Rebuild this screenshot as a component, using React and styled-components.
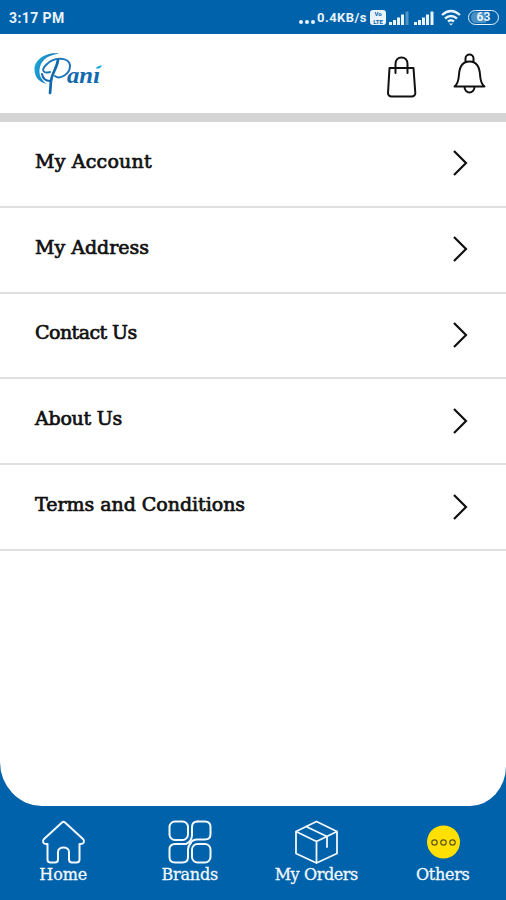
import React from "react";
import styled, { createGlobalStyle } from "styled-components";

const Global = createGlobalStyle`
  * { box-sizing: border-box; }
  body { margin: 0; background: #0062aa; }
`;

const Screen = styled.div`
  width: 506px;
  height: 900px;
  display: flex;
  flex-direction: column;
  overflow: hidden;
  background: #0062aa;
`;

const StatusBar = styled.div`
  height: 34px;
  flex: none;
  padding: 1px 7px 0 9px;
  display: flex;
  align-items: center;
  justify-content: space-between;
  color: #e9f3fb;
  font: 700 13px/34px Roboto, sans-serif;
`;

const Clock = styled.span`
  font-size: 14px;
  letter-spacing: 0.4px;
`;

const StatusIcons = styled.div`
  display: flex;
  align-items: center;
`;

const Dots = styled.div`
  display: flex;
  gap: 2px;
  margin: 8px 2px 0 0;
  i {
    width: 4px;
    height: 4px;
    border-radius: 50%;
    background: #e9f3fb;
  }
`;

const Speed = styled.span`
  width: 51px;
  white-space: nowrap;
  letter-spacing: 0.45px;
  margin-right: 2px;
`;

const SimBadge = styled.span`
  width: 16px;
  height: 15px;
  border-radius: 3px;
  background: #e9f3fb;
  color: #0062aa;
  display: flex;
  flex-direction: column;
  align-items: center;
  justify-content: center;
  font: 700 6px/7.2px Roboto, sans-serif;
  margin-right: 3px;
`;

const SignalIcon = styled.svg`
  margin-right: 5px;
`;

const Wifi = styled.svg`
  margin-left: 1px;
`;

const Battery = styled.span`
  width: 31px;
  height: 15px;
  margin-left: 6px;
  border: 1.5px solid #e9f3fb;
  border-radius: 8px;
  display: flex;
  align-items: center;
  justify-content: center;
  font: 700 12px/13px Roboto, sans-serif;
  background: linear-gradient(90deg, #4a8fc4 0 60%, #0062aa 60%) content-box;
  padding: 1px 2px;
`;

const Header = styled.header`
  height: 88px;
  flex: none;
  display: flex;
  align-items: flex-start;
  justify-content: space-between;
  padding: 16px 20px 0 32px;
  background: #fff;
  border-bottom: 9px solid #d5d5d5;
`;

const Actions = styled.div`
  display: flex;
  gap: 35px;
`;

const Panel = styled.main`
  height: 684px;
  flex: none;
  background: #fff;
  border-radius: 0 0 36px 42px / 0 0 40px 44px;
`;

const Row = styled.div`
  height: 85.8px;
  display: flex;
  align-items: center;
  justify-content: space-between;
  padding: 0 38px 6px 35px;
  border-bottom: 2px solid #e0e0e0;
`;

const Label = styled.span`
  font: 400 19px/26px "DejaVu Serif", serif;
  letter-spacing: ${(p) => p.$spacing}px;
  color: #111;
  -webkit-text-stroke: 0.7px #111;
  white-space: nowrap;
`;

const Chevron = styled.svg`
  margin-top: 5px;
`;

const Nav = styled.nav`
  height: 94px;
  flex: none;
  display: grid;
  grid-template-columns: repeat(4, 126.5px);
`;

const NavItem = styled.div`
  display: flex;
  flex-direction: column;
  align-items: center;
  padding-top: 14px;
`;

const NavLabel = styled.span`
  font: 400 16px/22px "DejaVu Serif", serif;
  letter-spacing: ${(p) => p.$spacing}px;
  color: #f2f8fd;
  -webkit-text-stroke: 0.3px #f2f8fd;
  white-space: nowrap;
`;

const NavIcon = styled.svg.attrs({ width: 44, height: 44, viewBox: "0 0 44 44" })`
  display: block;
  overflow: visible;
  fill: none;
  stroke: #f2f8fd;
  stroke-width: ${(p) => p.$weight || 2}px;
  stroke-linejoin: round;
  stroke-linecap: round;
`;

const Logo = () => (
  <svg width="72" height="48" viewBox="0 0 72 48" fill="none">
    <defs>
      <linearGradient id="water" x1="0" y1="0" x2="1" y2="0.4">
        <stop offset="0" stopColor="#20aede" />
        <stop offset="1" stopColor="#1269ad" />
      </linearGradient>
    </defs>
    <path d="M27 3.500C12 2 2 11 2.500 20c.2 7 4.500 12 12 14C7 28 6 21 9 14 12 8 18 5 27 3.500z" fill="url(#water)" />
    <path d="M18 22c-7 2-9-2-4-7 8-9 24-8 24 1 0 8-10 14-15 10" stroke="#1b76b8" strokeWidth="2" strokeLinecap="round" />
    <path d="M26 10c-1 8-6 13-7 21-.5 5-.5 8-1 12" stroke="#1269ad" strokeWidth="2.700" strokeLinecap="round" />
    <path d="M10 24c1 5 4 7 8 7" stroke="#1269ad" strokeWidth="2" strokeLinecap="round" />
    <text x="35" y="33" fill="#1269ad" fontFamily="Liberation Serif, serif" fontStyle="italic" fontWeight="700" fontSize="24" textLength="33" lengthAdjust="spacingAndGlyphs">anı</text>
    <path d="M64 18.500c1-3 3-2 6-3.500-1 3.500-3 4-6 3.500z" fill="#20aede" />
  </svg>
);

const Bag = () => (
  <svg width="32" height="48" viewBox="0 0 32 48" fill="none" stroke="#111" strokeWidth="2" strokeLinecap="round" strokeLinejoin="round">
    <path d="M3.500 18h24l1.800 25c.1 2-1.500 3.500-3.500 3.500H5.500c-2 0-3.600-1.500-3.500-3.500zM9.500 23V14c0-4 2.500-6.500 6-6.500s6 2.500 6 6.500v9" />
  </svg>
);

const Bell = () => (
  <svg width="33" height="48" viewBox="0 0 33 48" fill="none" stroke="#111" strokeWidth="2" strokeLinecap="round" strokeLinejoin="round">
    <path d="M1.500 36.500c3-2 4-5 4.500-12C6.500 17 9 11.500 16.500 11.500S26.500 17 27 24.500c.5 7 1.500 10 4.500 12zM12.500 12V8.500a4 4 0 0 1 8 0V12M11.500 37a5 5.500 0 0 0 10 0" />
  </svg>
);

const Signal = ({ weak }) => (
  <SignalIcon width="20" height="16" viewBox="0 0 20 16" fill="#e9f3fb">
    <path d="M0 12h3v3H0zM4 10h3v5H4zM8 7.500h3V15H8zM12 4.500h3V15h-3z" />
    <path d="M16.500 1.500h3V15h-3z" opacity={weak ? 0.35 : 1} />
  </SignalIcon>
);

const icons = {
  home: (
    <NavIcon>
      <path d="M21 2.500 3 19C1 21 2 24 5 24h1.500v15.500c0 2 1 3 3 3H14c2 0 3-1 3-3V32c0-6 11-6 11 0v7.500c0 2 1 3 3 3h4.500c2 0 3-1 3-3V24H40c3 0 4-3 2-5L24 2.500q-1.500-1.500-3 0z" />
    </NavIcon>
  ),
  brands: (
    <NavIcon>
      <rect x="1.500" y="1.500" width="18.500" height="18.500" rx="5.500" />
      <rect x="24" y="24" width="18.500" height="18.500" rx="5.500" />
      <path d="M29.500 1.500H37q5.500 0 5.500 5.500v7q0 5.500-5.500 5.500H28.500Q23.500 20 22 24" />
      <path d="M29.500 1.500Q24 1.500 24 7v8.500Q23.500 21.500 18 24H7q-5.500 0-5.500 5.500V37q0 5.500 5.500 5.500h7.500q5.500 0 5.500-5.500v-7.500Q20 26 23 22.500" />
    </NavIcon>
  ),
  orders: (
    <NavIcon $weight={1.8}>
      <path d="m22.500 1.500 20.500 10v22L22.500 43 2 33.500v-22zM2 11.500l20.500 10 20.500-10M22.500 21.500V43M12 6.500l21 10V27" />
    </NavIcon>
  ),
  others: (
    <NavIcon>
      <circle cx="22.500" cy="22" r="16.500" fill="#ffe000" stroke="none" />
      <g stroke="#5d5517" strokeWidth="1.200">
        <circle cx="13.500" cy="22.500" r="2.700" />
        <circle cx="22.500" cy="22.500" r="2.700" />
        <circle cx="31.500" cy="22.500" r="2.700" />
      </g>
    </NavIcon>
  ),
};

const rows = [
  ["My Account", 0.2],
  ["My Address", 0],
  ["Contact Us", -0.55],
  ["About Us", -0.25],
  ["Terms and Conditions", -0.03],
];

const tabs = [
  ["home", "Home", -0.1],
  ["brands", "Brands", -0.2],
  ["orders", "My Orders", -0.4],
  ["others", "Others", -0.3],
];

export default function App() {
  return (
    <Screen>
      <Global />
      <StatusBar>
        <Clock>3:17 PM</Clock>
        <StatusIcons>
          <Dots><i /><i /><i /></Dots>
          <Speed>0.4KB/s</Speed>
          <SimBadge><span>Vo</span><span>LTE</span></SimBadge>
          <Signal weak />
          <Signal />
          <Wifi width="22" height="17" viewBox="0 0 22 17" fill="none" stroke="#e9f3fb" strokeWidth="2.300">
            <path d="M2 6q9-8 18 0M5 9.500q6-5 12 0M8 12.500q3-2.500 6 0" />
            <path d="m9 14.500 2 2 2-2z" fill="#e9f3fb" stroke="none" />
          </Wifi>
          <Battery>63</Battery>
        </StatusIcons>
      </StatusBar>
      <Header>
        <Logo />
        <Actions><Bag /><Bell /></Actions>
      </Header>
      <Panel>
        {rows.map(([text, spacing]) => (
          <Row key={text}>
            <Label $spacing={spacing}>{text}</Label>
            <Chevron width="16" height="28" viewBox="0 0 16 28" fill="none" stroke="#111" strokeWidth="2.200">
              <path d="m2 2 12 12L2 26" />
            </Chevron>
          </Row>
        ))}
      </Panel>
      <Nav>
        {tabs.map(([icon, text, spacing]) => (
          <NavItem key={icon}>
            {icons[icon]}
            <NavLabel $spacing={spacing}>{text}</NavLabel>
          </NavItem>
        ))}
      </Nav>
    </Screen>
  );
}
